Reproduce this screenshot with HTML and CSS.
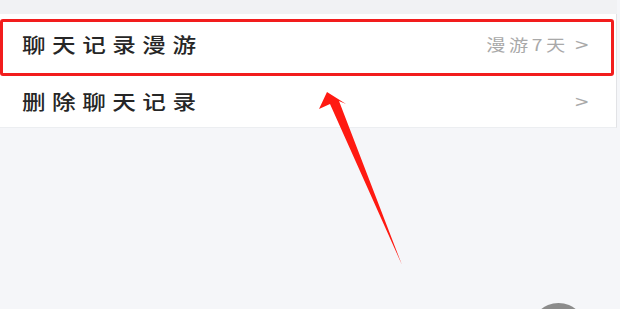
FILE: index.html
```html
<!DOCTYPE html>
<html lang="zh-CN">
<head>
    <meta charset="UTF-8">
    <meta name="viewport" content="width=device-width, initial-scale=1.0">
    <title>聊天记录</title>
    <link rel="stylesheet" href="styles.css">
</head>
<body>
    <div class="page">
        <div class="top-gap"></div>
        <div class="list">
            <div class="item highlight">
                <span class="label">聊天记录漫游</span>
                <span class="extra"><span class="value">漫游7天</span><span class="chevron">&gt;</span></span>
            </div>
            <div class="item">
                <span class="label">删除聊天记录</span>
                <span class="extra"><span class="chevron">&gt;</span></span>
            </div>
        </div>
        <div class="rest"></div>

        <!-- annotation arrow -->
        <svg class="arrow" width="620" height="309" viewBox="0 0 620 309">
            <polygon points="327,92 319,109 330,104 402,265 339,101 346,104" fill="#ff1a12"/>
        </svg>
        <div class="fab"></div>
    </div>
</body>
</html>
```

FILE: styles.css
```css
body {
    margin: 0;
    padding: 0;
    font-family: "Noto Sans CJK SC", "Noto Sans", sans-serif;
    background-color: #f5f6f9;
    overflow: hidden;
}
.page {
    position: relative;
    width: 620px;
    height: 309px;
    overflow: hidden;
    background-color: #f5f6f9;
}
.top-gap {
    height: 14px;
    background-color: #f1f2f4;
    margin-right: 3px;
}
.list {
    width: 617px;
    padding-top: 5px;
    background-color: #fff;
    border-right: 1px solid #e2e3e6;
    border-bottom: 1px solid #eceef1;
    box-sizing: border-box;
}
.item {
    display: flex;
    justify-content: space-between;
    align-items: center;
    box-sizing: border-box;
    height: 51px;
    padding: 0 28px 0 22px;
}
.item.highlight {
    height: 57px;
    padding: 0 23px 7px 19px;
    margin-right: 2px;
    border: 3px solid #f21d1d;
    border-radius: 3px;
}
.label {
    display: inline-block;
    font-size: 20px;
    font-weight: 500;
    letter-spacing: 5.5px;
    color: #262626;
    transform: scaleX(1.18);
    transform-origin: left center;
}
.extra {
    display: flex;
    align-items: center;
    color: #a9a9a9;
}
.value {
    display: inline-block;
    font-size: 16px;
    letter-spacing: 3px;
    transform: scaleX(1.2);
    transform-origin: right center;
}
.chevron {
    margin-left: 6px;
    font-family: "DejaVu Sans", sans-serif;
    font-size: 16px;
    color: #a9a9a9;
    display: inline-block;
    transform: scaleX(1.15);
}
.rest {
    height: 180px;
}
.arrow {
    position: absolute;
    left: 0;
    top: 0;
}
.fab {
    position: absolute;
    left: 531px;
    top: 303px;
    width: 55px;
    height: 55px;
    border-radius: 50%;
    background-color: #8c8c8c;
}
```
